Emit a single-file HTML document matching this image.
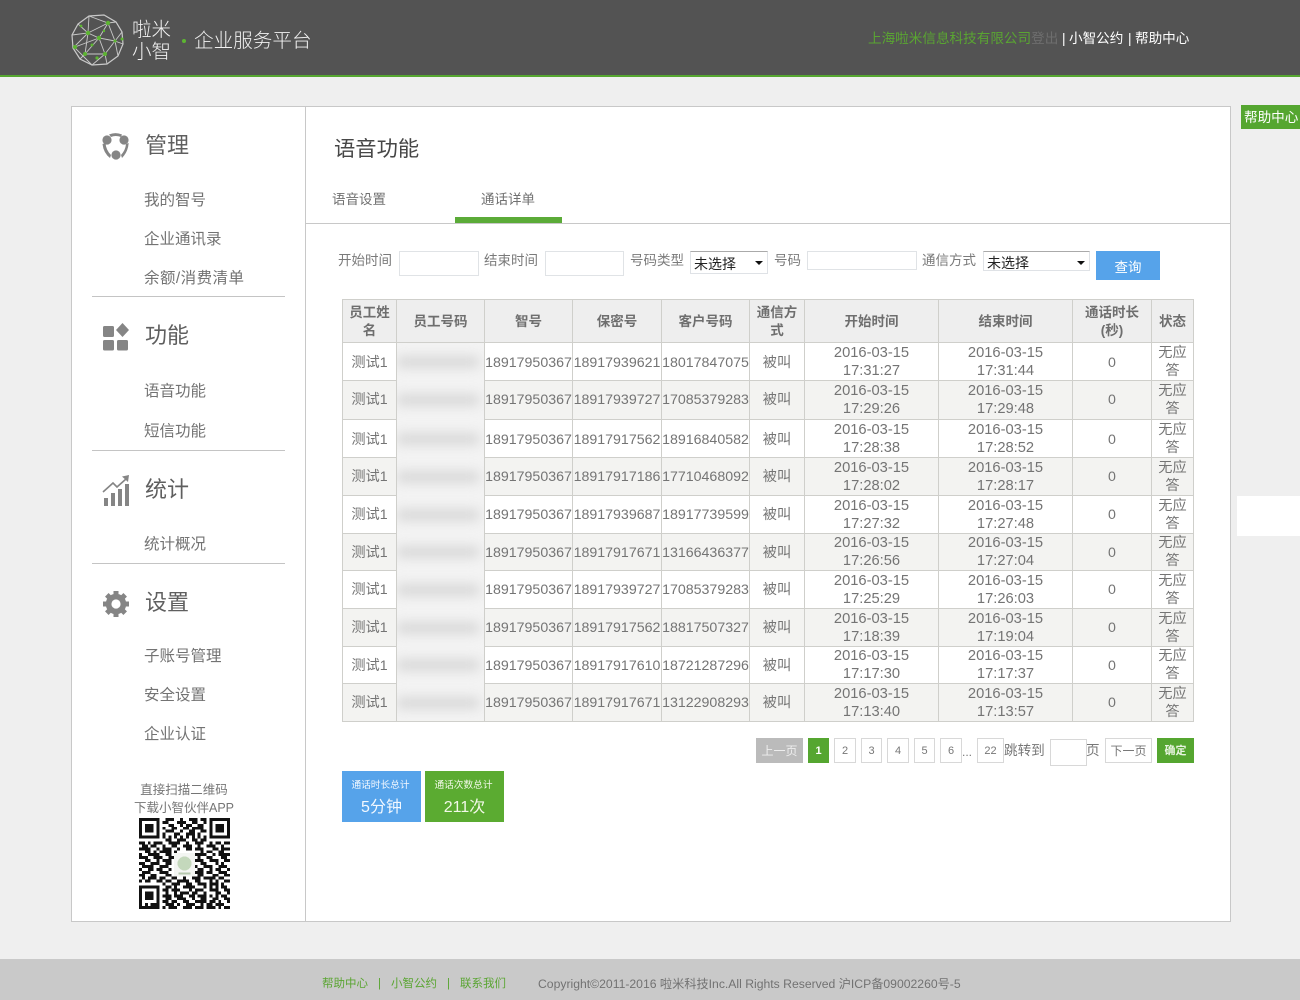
<!DOCTYPE html>
<html lang="zh-CN"><head><meta charset="utf-8"><title>语音功能</title>
<style>
*{box-sizing:border-box;margin:0;padding:0}
html,body{width:1300px;height:1000px;overflow:hidden;background:#efefef}
body{position:relative;font-family:"Liberation Sans","Noto Sans CJK SC",sans-serif;color:#777}
.a,.t{position:absolute}
.t{white-space:nowrap;line-height:20px}
.side{font-size:15.5px;left:144px;color:#737373}
.head{font-size:22px;left:145px;color:#5f5f5f;line-height:30px}
.ln{position:absolute;left:92px;width:193px;height:1px;background:#c4c4c4}
.lab{font-size:13.5px;color:#7a7a7a;top:251px}
.inp{position:absolute;background:#fff;border:1px solid #e0e3e6}
.sel{position:absolute;background:#fff;border:1px solid #dfe2e6;border-top-color:#aaa;color:#222;font-size:14px;line-height:22px;padding:1px 0 0 3px}
.sel:after{content:"";position:absolute;right:4px;top:9px;border:4px solid transparent;border-top:4px solid #111;border-bottom:0}
table{position:absolute;left:342px;top:299px;width:851px;border-collapse:collapse;table-layout:fixed;border:1px solid #c8c8c8;font-size:14.2px}
td,th{border:1px solid #cfcfcb;text-align:center;padding:0;line-height:18px;color:#747474;font-weight:400;overflow:hidden;white-space:normal}
th{background:#eee;font-weight:700;font-size:13.5px;color:#6e6e6e;padding-top:1px}
tbody tr:nth-child(even) td{background:#f3f3f1}
td.n{white-space:nowrap;padding-top:2px}
td.d{font-size:14.7px}
td.c{padding-top:2px}
tbody tr.u td.n,tbody tr.u td.c{padding-top:0}
.p{position:absolute;top:738px;height:25px;background:#fff;border:1px solid #d8d8d8;color:#777;font-size:12px;line-height:24px;text-align:center}
.g{color:#5aa532}
.bar{position:absolute;left:0;width:82px;height:12px;background:#d9d9d9}
</style></head><body>
<!-- header -->
<div class="a" style="left:0;top:0;width:1300px;height:77px;background:#535353;border-bottom:2px solid #55a630"></div>
<svg class="a" style="left:70px;top:14px" width="55" height="53" viewBox="0 0 55 53" fill="none" stroke="#c9c9c9" stroke-width=".9">
<path d="M19 2L34 1L46 8L52 18L53 30L48 42L37 50L22 51L10 45L3 34L2 21L8 10Z" stroke-width="1.2"/>
<path d="M19 2L38 9L46 8M19 2L18 19L8 10M38 9L18 19L2 21M38 9L45 27L53 30M38 9L29 24L18 19M18 19L4 33L22 51M18 19L29 24L45 27M29 24L5 33M29 24L35 40L45 27M29 24L15 40L35 40M45 27L48 42M35 40L37 50M35 40L22 51M15 40L10 45M18 19L15 40M52 18L45 27"/>
<g fill="#5db532" stroke="none"><circle cx="38" cy="9" r="2.2"/><circle cx="18" cy="19" r="2.2"/><circle cx="29" cy="24" r="2.2"/><circle cx="5" cy="33" r="2"/><circle cx="15" cy="40" r="2"/><circle cx="35" cy="40" r="2"/><circle cx="45" cy="27" r="1.5"/><circle cx="52" cy="25" r="1.5"/><circle cx="22" cy="31" r="1.5"/><circle cx="11" cy="12" r="1.4"/><circle cx="27" cy="44" r="1.6"/><circle cx="34" cy="17" r="1.2"/></g></svg>
<div class="t" style="left:132px;top:19px;font-size:19.5px;line-height:22px;color:#f2f2f2;font-weight:300">啦米<br>小智</div>
<div class="a" style="left:182px;top:39px;width:4px;height:4px;border-radius:50%;background:#5db532"></div>
<div class="t" style="left:194px;top:29px;font-size:19.6px;line-height:24px;color:#f2f2f2;font-weight:300">企业服务平台</div>
<div class="t" style="left:868px;top:29px;font-size:13.6px"><span class="g">上海啦米信息科技有限公司</span><span style="color:#6e6e6e">登出</span></div>
<div class="t" style="left:1062px;top:29px;font-size:13.6px;color:#fff">|</div>
<div class="t" style="left:1069px;top:29px;font-size:13.6px;color:#fff">小智公约</div>
<div class="t" style="left:1128px;top:29px;font-size:13.6px;color:#fff">|</div>
<div class="t" style="left:1135px;top:29px;font-size:13.6px;color:#fff">帮助中心</div>
<div class="t" style="left:1241px;top:105px;width:59px;height:24px;background:#55a630;color:#fff;font-size:13.6px;line-height:26px;padding-left:3px;overflow:hidden">帮助中心</div>
<div class="a" style="left:1237px;top:496px;width:63px;height:40px;background:#fff"></div>
<!-- panel -->
<div class="a" style="left:71px;top:106px;width:1160px;height:816px;background:#fff;border:1px solid #c8c8c8"></div>
<div class="a" style="left:305px;top:107px;width:1px;height:814px;background:#c8c8c8"></div>
<!-- sidebar -->
<svg class="a" style="left:100px;top:131px" width="32" height="32" viewBox="0 0 32 32" fill="#858585">
<circle cx="7" cy="9" r="4.6"/><circle cx="24" cy="9" r="4.6"/><circle cx="16" cy="24" r="4.6"/>
<path d="M9 3.5Q15.500 0.800 22 3.500L21 6Q15.500 4 11 6ZM2.500 13L5.500 12Q6 19 11 24L10 27Q3.500 22 2.500 13ZM28.700 12L26 13Q25.500 19 21 24L22 27Q28 21 28.700 12Z"/></svg>
<div class="t head" style="top:131px">管理</div>
<div class="t side" style="top:191px">我的智号</div>
<div class="t side" style="top:230px">企业通讯录</div>
<div class="t side" style="top:269px;letter-spacing:.45px">余额/消费清单</div>
<div class="ln" style="top:296px"></div>
<svg class="a" style="left:102px;top:323px" width="28" height="28" viewBox="0 0 28 28" fill="#858585">
<rect x="1" y="3" width="11" height="11" rx="1.500"/><rect x="1" y="17" width="11" height="10.500" rx="1.500"/><rect x="15" y="17" width="11" height="10.500" rx="1.500"/><path d="M20.500 0L27 7L20.500 14L14 7Z"/></svg>
<div class="t head" style="top:321px">功能</div>
<div class="t side" style="top:382px">语音功能</div>
<div class="t side" style="top:422px">短信功能</div>
<div class="ln" style="top:450px"></div>
<svg class="a" style="left:102px;top:474px" width="30" height="34" viewBox="0 0 30 34" fill="#858585">
<rect x="2" y="24" width="4" height="8"/><rect x="9" y="19" width="4" height="13"/><rect x="16" y="15" width="4" height="17"/><rect x="23" y="10" width="4" height="22"/>
<path d="M1 18L11 9L15 13L24 5" fill="none" stroke="#858585" stroke-width="1.600"/><path d="M20 2.500L27 1L26 8Z"/></svg>
<div class="t head" style="top:475px">统计</div>
<div class="t side" style="top:535px">统计概况</div>
<div class="ln" style="top:563px"></div>
<svg class="a" style="left:102px;top:590px" width="28" height="28" viewBox="0 0 28 28"><circle cx="14" cy="14" r="7.500" fill="none" stroke="#858585" stroke-width="5.500"/><g stroke="#858585" stroke-width="5"><path d="M14 1V27M1 14H27M4.800 4.800L23.200 23.200M23.200 4.800L4.800 23.200"/></g><circle cx="14" cy="14" r="4.600" fill="#fff"/></svg>
<div class="t head" style="top:588px">设置</div>
<div class="t side" style="top:647px">子账号管理</div>
<div class="t side" style="top:686px">安全设置</div>
<div class="t side" style="top:725px">企业认证</div>
<div class="t" style="left:67px;width:234px;top:781px;text-align:center;font-size:12.5px;line-height:18px;white-space:normal;color:#757575">直接扫描二维码<br>下载小智伙伴APP</div>
<svg class="a" style="left:138px;top:818px" width="93" height="91" viewBox="0 0 31 31" shape-rendering="crispEdges">
<path fill="none" stroke="#111" d="M0 .5h7M9 .5h3M14 .5h1M17 .5h3M21 .5h2M24 .5h7M0 1.500h1M6 1.500h1M8 1.500h2M13 1.500h3M18 1.500h2M22 1.500h1M24 1.500h1M30 1.500h1M0 2.500h1M2 2.500h3M6 2.500h1M10 2.500h2M14 2.500h1M16 2.500h2M20 2.500h2M24 2.500h1M26 2.500h3M30 2.500h1M0 3.500h1M2 3.500h3M6 3.500h1M8 3.500h1M11 3.500h2M15 3.500h2M18 3.500h4M24 3.500h1M26 3.500h3M30 3.500h1M0 4.500h1M2 4.500h3M6 4.500h1M9 4.500h3M14 4.500h1M17 4.500h2M21 4.500h2M24 4.500h1M26 4.500h3M30 4.500h1M0 5.500h1M6 5.500h1M8 5.500h1M12 5.500h2M16 5.500h3M20 5.500h1M24 5.500h1M30 5.500h1M0 6.500h7M8 6.500h1M10 6.500h1M12 6.500h1M14 6.500h1M16 6.500h1M18 6.500h1M20 6.500h1M22 6.500h1M24 6.500h7M9 7.500h2M13 7.500h3M18 7.500h2M21 7.500h2M0 8.500h2M3 8.500h1M5 8.500h3M10 8.500h4M16 8.500h1M19 8.500h3M24 8.500h1M26 8.500h2M29 8.500h2M1 9.500h2M4 9.500h2M8 9.500h1M11 9.500h2M15 9.500h3M20 9.500h1M23 9.500h3M28 9.500h1M0 10.500h4M6 10.500h1M8 10.500h3M13 10.500h1M16 10.500h2M19 10.500h3M25 10.500h2M28 10.500h3M2 11.500h2M5 11.500h1M7 11.500h4M12 11.500h1M21 11.500h1M23 11.500h2M27 11.500h2M0 12.500h1M3 12.500h4M9 12.500h2M19 12.500h4M25 12.500h1M27 12.500h4M0 13.500h3M5 13.500h3M10 13.500h2M20 13.500h1M23 13.500h2M28 13.500h2M2 14.500h2M6 14.500h1M8 14.500h3M19 14.500h3M24 14.500h3M29 14.500h2M0 15.500h2M4 15.500h3M9 15.500h2M21 15.500h2M26 15.500h1M28 15.500h1M1 16.500h4M7 16.500h3M19 16.500h1M22 16.500h3M27 16.500h3M0 17.500h1M3 17.500h2M6 17.500h2M10 17.500h1M20 17.500h2M24 17.500h1M26 17.500h2M30 17.500h1M1 18.500h3M7 18.500h3M19 18.500h3M23 18.500h2M27 18.500h3M0 19.500h2M4 19.500h2M9 19.500h2M12 19.500h2M15 19.500h3M20 19.500h2M25 19.500h2M29 19.500h2M1 20.500h1M3 20.500h3M7 20.500h2M11 20.500h2M15 20.500h1M18 20.500h3M22 20.500h4M27 20.500h2M0 21.500h1M2 21.500h2M6 21.500h2M9 21.500h2M13 21.500h4M19 21.500h2M24 21.500h1M26 21.500h1M29 21.500h2M8 22.500h1M11 22.500h3M16 22.500h2M20 22.500h3M24 22.500h3M28 22.500h1M0 23.500h7M9 23.500h2M12 23.500h1M15 23.500h4M22 23.500h1M24 23.500h1M26 23.500h1M28 23.500h2M0 24.500h1M6 24.500h1M8 24.500h2M11 24.500h3M17 24.500h1M19 24.500h3M24 24.500h3M29 24.500h2M0 25.500h1M2 25.500h3M6 25.500h1M9 25.500h1M12 25.500h1M14 25.500h3M18 25.500h2M22 25.500h1M26 25.500h2M30 25.500h1M0 26.500h1M2 26.500h3M6 26.500h1M8 26.500h3M12 26.500h3M17 26.500h2M20 26.500h3M24 26.500h1M26 26.500h1M28 26.500h2M0 27.500h1M2 27.500h3M6 27.500h1M9 27.500h2M13 27.500h3M18 27.500h1M21 27.500h2M25 27.500h2M29 27.500h2M0 28.500h1M6 28.500h1M8 28.500h2M11 28.500h2M15 28.500h2M19 28.500h4M24 28.500h2M27 28.500h1M30 28.500h1M0 29.500h1M2 29.500h1M4 29.500h3M9 29.500h3M13 29.500h1M16 29.500h3M21 29.500h1M23 29.500h2M26 29.500h3M0 30.500h7M8 30.500h1M10 30.500h3M15 30.500h3M19 30.500h3M23 30.500h3M27 30.500h1M29 30.500h2"/>
<rect x="12" y="12" width="7" height="8" fill="#f3f5f2"/><circle cx="15.500" cy="15.500" r="2.400" fill="#c4d8bc"/><rect x="13.500" y="18.500" width="4" height=".7" fill="#b5c8ad"/></svg>
<!-- title -->
<div class="t" style="left:334px;top:134px;font-size:21.3px;line-height:30px;color:#474747">语音功能</div>
<div class="t" style="left:332px;top:190px;font-size:13.5px;color:#707070">语音设置</div>
<div class="t" style="left:481px;top:190px;font-size:13.5px;color:#707070">通话详单</div>
<div class="a" style="left:306px;top:223px;width:924px;height:1px;background:#c8c8c8"></div>
<div class="a" style="left:455px;top:217px;width:107px;height:6px;background:#5bab38"></div>
<!-- filter -->
<div class="t lab" style="left:338px">开始时间</div><div class="inp" style="left:399px;top:251px;width:80px;height:25px"></div>
<div class="t lab" style="left:484px">结束时间</div><div class="inp" style="left:545px;top:251px;width:79px;height:25px"></div>
<div class="t lab" style="left:630px">号码类型</div><div class="sel" style="left:690px;top:251px;width:78px;height:23px">未选择</div>
<div class="t lab" style="left:774px">号码</div><div class="inp" style="left:807px;top:251px;width:110px;height:19px"></div>
<div class="t lab" style="left:922px">通信方式</div><div class="sel" style="left:983px;top:251px;width:107px;height:20px;line-height:20px">未选择</div>
<div class="t" style="left:1096px;top:251px;width:64px;height:29px;background:#56a3ea;color:#fff;font-size:13.5px;line-height:33px;text-align:center">查询</div>
<!-- table -->
<table>
<colgroup><col style="width:54px"><col style="width:88px"><col style="width:88px"><col style="width:89px"><col style="width:88px"><col style="width:55px"><col style="width:134px"><col style="width:134px"><col style="width:79px"><col style="width:42px"></colgroup>
<thead><tr style="height:43px"><th>员工姓<br>名</th><th>员工号码</th><th>智号</th><th>保密号</th><th>客户号码</th><th>通信方<br>式</th><th>开始时间</th><th>结束时间</th><th>通话时长<br>(秒)</th><th>状态</th></tr></thead>
<tbody>
<tr style="height:38px"><td class="c">测试1</td><td></td><td class="n">18917950367</td><td class="n">18917939621</td><td class="n">18017847075</td><td class="c">被叫</td><td class="d">2016-03-15<br>17:31:27</td><td class="d">2016-03-15<br>17:31:44</td><td class="c">0</td><td>无应<br>答</td></tr>
<tr class="u" style="height:39px"><td class="c">测试1</td><td></td><td class="n">18917950367</td><td class="n">18917939727</td><td class="n">17085379283</td><td class="c">被叫</td><td class="d">2016-03-15<br>17:29:26</td><td class="d">2016-03-15<br>17:29:48</td><td class="c">0</td><td>无应<br>答</td></tr>
<tr style="height:38px"><td class="c">测试1</td><td></td><td class="n">18917950367</td><td class="n">18917917562</td><td class="n">18916840582</td><td class="c">被叫</td><td class="d">2016-03-15<br>17:28:38</td><td class="d">2016-03-15<br>17:28:52</td><td class="c">0</td><td>无应<br>答</td></tr>
<tr class="u" style="height:38px"><td class="c">测试1</td><td></td><td class="n">18917950367</td><td class="n">18917917186</td><td class="n">17710468092</td><td class="c">被叫</td><td class="d">2016-03-15<br>17:28:02</td><td class="d">2016-03-15<br>17:28:17</td><td class="c">0</td><td>无应<br>答</td></tr>
<tr class="u" style="height:38px"><td class="c">测试1</td><td></td><td class="n">18917950367</td><td class="n">18917939687</td><td class="n">18917739599</td><td class="c">被叫</td><td class="d">2016-03-15<br>17:27:32</td><td class="d">2016-03-15<br>17:27:48</td><td class="c">0</td><td>无应<br>答</td></tr>
<tr style="height:37px"><td class="c">测试1</td><td></td><td class="n">18917950367</td><td class="n">18917917671</td><td class="n">13166436377</td><td class="c">被叫</td><td class="d">2016-03-15<br>17:26:56</td><td class="d">2016-03-15<br>17:27:04</td><td class="c">0</td><td>无应<br>答</td></tr>
<tr class="u" style="height:38px"><td class="c">测试1</td><td></td><td class="n">18917950367</td><td class="n">18917939727</td><td class="n">17085379283</td><td class="c">被叫</td><td class="d">2016-03-15<br>17:25:29</td><td class="d">2016-03-15<br>17:26:03</td><td class="c">0</td><td>无应<br>答</td></tr>
<tr class="u" style="height:38px"><td class="c">测试1</td><td></td><td class="n">18917950367</td><td class="n">18917917562</td><td class="n">18817507327</td><td class="c">被叫</td><td class="d">2016-03-15<br>17:18:39</td><td class="d">2016-03-15<br>17:19:04</td><td class="c">0</td><td>无应<br>答</td></tr>
<tr style="height:37px"><td class="c">测试1</td><td></td><td class="n">18917950367</td><td class="n">18917917610</td><td class="n">18721287296</td><td class="c">被叫</td><td class="d">2016-03-15<br>17:17:30</td><td class="d">2016-03-15<br>17:17:37</td><td class="c">0</td><td>无应<br>答</td></tr>
<tr class="u" style="height:38px"><td class="c">测试1</td><td></td><td class="n">18917950367</td><td class="n">18917917671</td><td class="n">13122908293</td><td class="c">被叫</td><td class="d">2016-03-15<br>17:13:40</td><td class="d">2016-03-15<br>17:13:57</td><td class="c">0</td><td>无应<br>答</td></tr>
</tbody></table>
<!-- blurred column -->
<div class="a" style="left:397px;top:343px;width:87px;height:377px;overflow:hidden;background:#f3f3f3">
<div class="a" style="left:0;top:0;width:87px;height:377px;filter:blur(5.5px)">
<div class="bar" style="top:13px"></div><div class="bar" style="top:51px"></div><div class="bar" style="top:90px"></div><div class="bar" style="top:128px"></div><div class="bar" style="top:166px"></div><div class="bar" style="top:203px"></div><div class="bar" style="top:241px"></div><div class="bar" style="top:279px"></div><div class="bar" style="top:316px"></div><div class="bar" style="top:354px"></div>
</div></div>
<!-- pagination -->
<div class="p" style="left:756px;width:47px;background:#bbb;border-color:#bbb;color:#eee">上一页</div>
<div class="p" style="left:808px;width:21px;background:#55a630;border-color:#55a630;color:#fff;font-weight:700;font-size:11px">1</div>
<div class="p" style="left:834px;width:22px;font-size:11px">2</div>
<div class="p" style="left:861px;width:21px;font-size:11px">3</div>
<div class="p" style="left:887px;width:22px;font-size:11px">4</div>
<div class="p" style="left:914px;width:21px;font-size:11px">5</div>
<div class="p" style="left:940px;width:22px;font-size:11px">6</div>
<div class="t" style="left:962px;top:742px;font-size:12px">...</div>
<div class="p" style="left:977px;width:27px;font-size:11px">22</div>
<div class="t" style="left:1004px;top:741px;font-size:13.6px;color:#777">跳转到</div>
<div class="inp" style="left:1050px;top:739px;width:37px;height:27px;border-color:#d8d8d8"></div>
<div class="t" style="left:1086px;top:741px;font-size:13.6px;color:#777">页</div>
<div class="p" style="left:1105px;width:47px">下一页</div>
<div class="p" style="left:1157px;width:37px;background:#55a630;border-color:#55a630;color:#e8f4e0;font-size:11px;font-weight:700">确定</div>
<!-- totals -->
<div class="a" style="left:342px;top:771px;width:79px;height:51px;background:#56a3ea"></div>
<div class="t" style="left:341px;top:776px;width:79px;text-align:center;color:#f2f8ff;font-size:9.7px">通话时长总计</div>
<div class="t" style="left:342px;top:798px;width:79px;text-align:center;color:#f2f8ff;font-size:16px">5分钟</div>
<div class="a" style="left:425px;top:771px;width:79px;height:51px;background:#5bab31"></div>
<div class="t" style="left:424px;top:776px;width:79px;text-align:center;color:#f2f8e8;font-size:9.7px">通话次数总计</div>
<div class="t" style="left:425px;top:798px;width:79px;text-align:center;color:#f2f8e8;font-size:16px">211次</div>
<!-- footer -->
<div class="a" style="left:0;top:959px;width:1300px;height:41px;background:#c9c9c9"></div>
<div class="t g" style="left:322px;top:974px;font-size:11.5px">帮助中心</div>
<div class="t g" style="left:378px;top:974px;font-size:11.5px">|</div>
<div class="t g" style="left:391px;top:974px;font-size:11.5px">小智公约</div>
<div class="t g" style="left:447px;top:974px;font-size:11.5px">|</div>
<div class="t g" style="left:460px;top:974px;font-size:11.5px">联系我们</div>
<div class="t" style="left:538px;top:974px;font-size:12.2px;color:#727272">Copyright©2011-2016 啦米科技Inc.All Rights Reserved 沪ICP备09002260号-5</div>
</body></html>
